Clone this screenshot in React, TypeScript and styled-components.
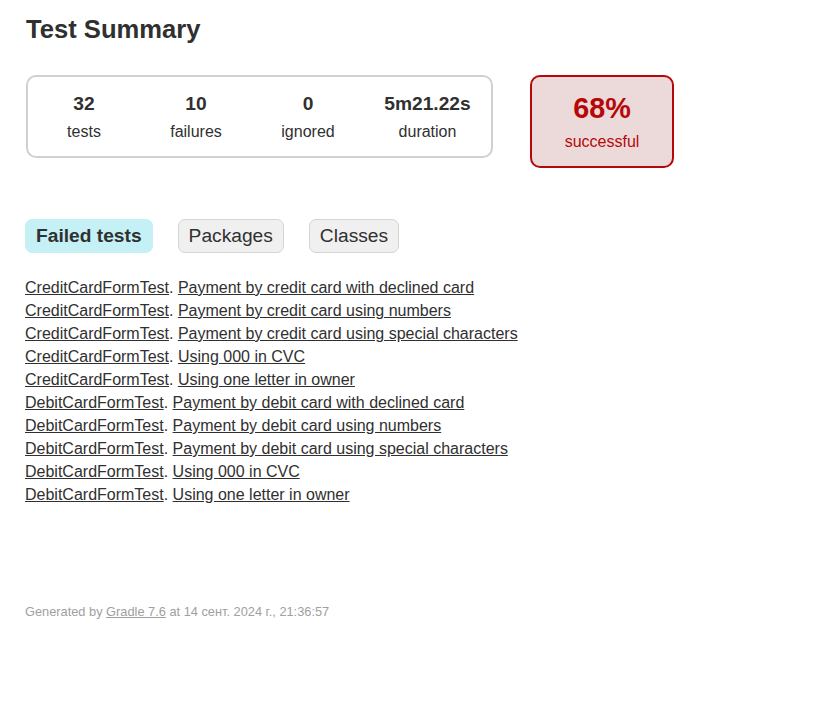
import * as React from "react"
import styled, { createGlobalStyle } from "styled-components"

const GlobalStyle = createGlobalStyle`
  body {
    margin: 0;
    padding: 0;
    background: #ffffff;
    font-family: "Liberation Sans", Arial, sans-serif;
    font-size: 16px;
    color: #303030;
  }
`

const Content = styled.div`
  padding: 14px 25px 30px;
`

const Title = styled.h1`
  margin: 0 0 31px 1px;
  font-size: 25.6px;
  line-height: 30px;
  font-weight: bold;
  white-space: nowrap;
`

const Summary = styled.div`
  display: flex;
  align-items: flex-start;
  margin-left: 1px;
`

const SummaryGroup = styled.div`
  display: flex;
  border: solid 2px #d0d0d0;
  border-radius: 10px;
`

const InfoBox = styled.div<{ $width: number }>`
  width: ${(p) => p.$width}px;
  padding: 16px 0 15px;
  text-align: center;
`

const Counter = styled.div`
  font-size: 19.2px;
  line-height: 22px;
  font-weight: bold;
  margin-bottom: 8px;
`

const Label = styled.p`
  margin: 0;
  line-height: 18px;
`

const SuccessRate = styled.div`
  box-sizing: border-box;
  width: 144px;
  margin-left: 37px;
  padding: 15px 0;
  text-align: center;
  border: solid 2px #b60808;
  border-radius: 10px;
  background-color: #ecdada;
  color: #b60808;
`

const Percent = styled.div`
  font-size: 28.8px;
  line-height: 33px;
  font-weight: bold;
  margin-bottom: 8px;
`

const TabLinks = styled.ul`
  display: flex;
  gap: 25px;
  margin: 51px 0 0;
  padding: 0;
  list-style: none;
`

const Tab = styled.li<{ $selected?: boolean }>`
  padding: 5px 10px;
  border-radius: 7px;
  border: solid 1px ${(p) => (p.$selected ? "#c5f0f5" : "#d4d4d4")};
  background-color: ${(p) => (p.$selected ? "#c5f0f5" : "#f0f0f0")};
  font-size: 19.2px;
  line-height: 22px;
  font-weight: ${(p) => (p.$selected ? "bold" : "normal")};
  white-space: nowrap;
`

const LinkList = styled.ul`
  margin: 26px 0 0;
  padding: 0;
  list-style: none;
`

const LinkItem = styled.li`
  line-height: 18px;
  margin-bottom: 5px;
  white-space: nowrap;
`

const Link = styled.a`
  color: #303030;
  text-decoration: underline;
`

const Footer = styled.div`
  margin-top: 100px;
  font-size: 12.8px;
  line-height: 15px;
  color: #a0a0a0;
  white-space: nowrap;
`

const FooterLink = styled.a`
  color: #a0a0a0;
  text-decoration: underline;
`

const counters = [
  { value: "32", label: "tests", width: 112 },
  { value: "10", label: "failures", width: 112 },
  { value: "0", label: "ignored", width: 112 },
  { value: "5m21.22s", label: "duration", width: 127 },
]

const failed = [
  ["CreditCardFormTest", "Payment by credit card with declined card"],
  ["CreditCardFormTest", "Payment by credit card using numbers"],
  ["CreditCardFormTest", "Payment by credit card using special characters"],
  ["CreditCardFormTest", "Using 000 in CVC"],
  ["CreditCardFormTest", "Using one letter in owner"],
  ["DebitCardFormTest", "Payment by debit card with declined card"],
  ["DebitCardFormTest", "Payment by debit card using numbers"],
  ["DebitCardFormTest", "Payment by debit card using special characters"],
  ["DebitCardFormTest", "Using 000 in CVC"],
  ["DebitCardFormTest", "Using one letter in owner"],
]

const App: React.FC = () => {
  return (
    <>
      <GlobalStyle />
      <Content>
        <Title>Test Summary</Title>
        <Summary>
          <SummaryGroup>
            {counters.map((c) => (
              <InfoBox key={c.label} $width={c.width}>
                <Counter>{c.value}</Counter>
                <Label>{c.label}</Label>
              </InfoBox>
            ))}
          </SummaryGroup>
          <SuccessRate>
            <Percent>68%</Percent>
            <Label>successful</Label>
          </SuccessRate>
        </Summary>
        <TabLinks>
          <Tab $selected>Failed tests</Tab>
          <Tab>Packages</Tab>
          <Tab>Classes</Tab>
        </TabLinks>
        <LinkList>
          {failed.map(([cls, test], i) => (
            <LinkItem key={i}>
              <Link href="#">{cls}</Link>. <Link href="#">{test}</Link>
            </LinkItem>
          ))}
        </LinkList>
        <Footer>
          Generated by <FooterLink href="#">Gradle 7.6</FooterLink> at 14 сент. 2024 г., 21:36:57
        </Footer>
      </Content>
    </>
  )
}

export default App
